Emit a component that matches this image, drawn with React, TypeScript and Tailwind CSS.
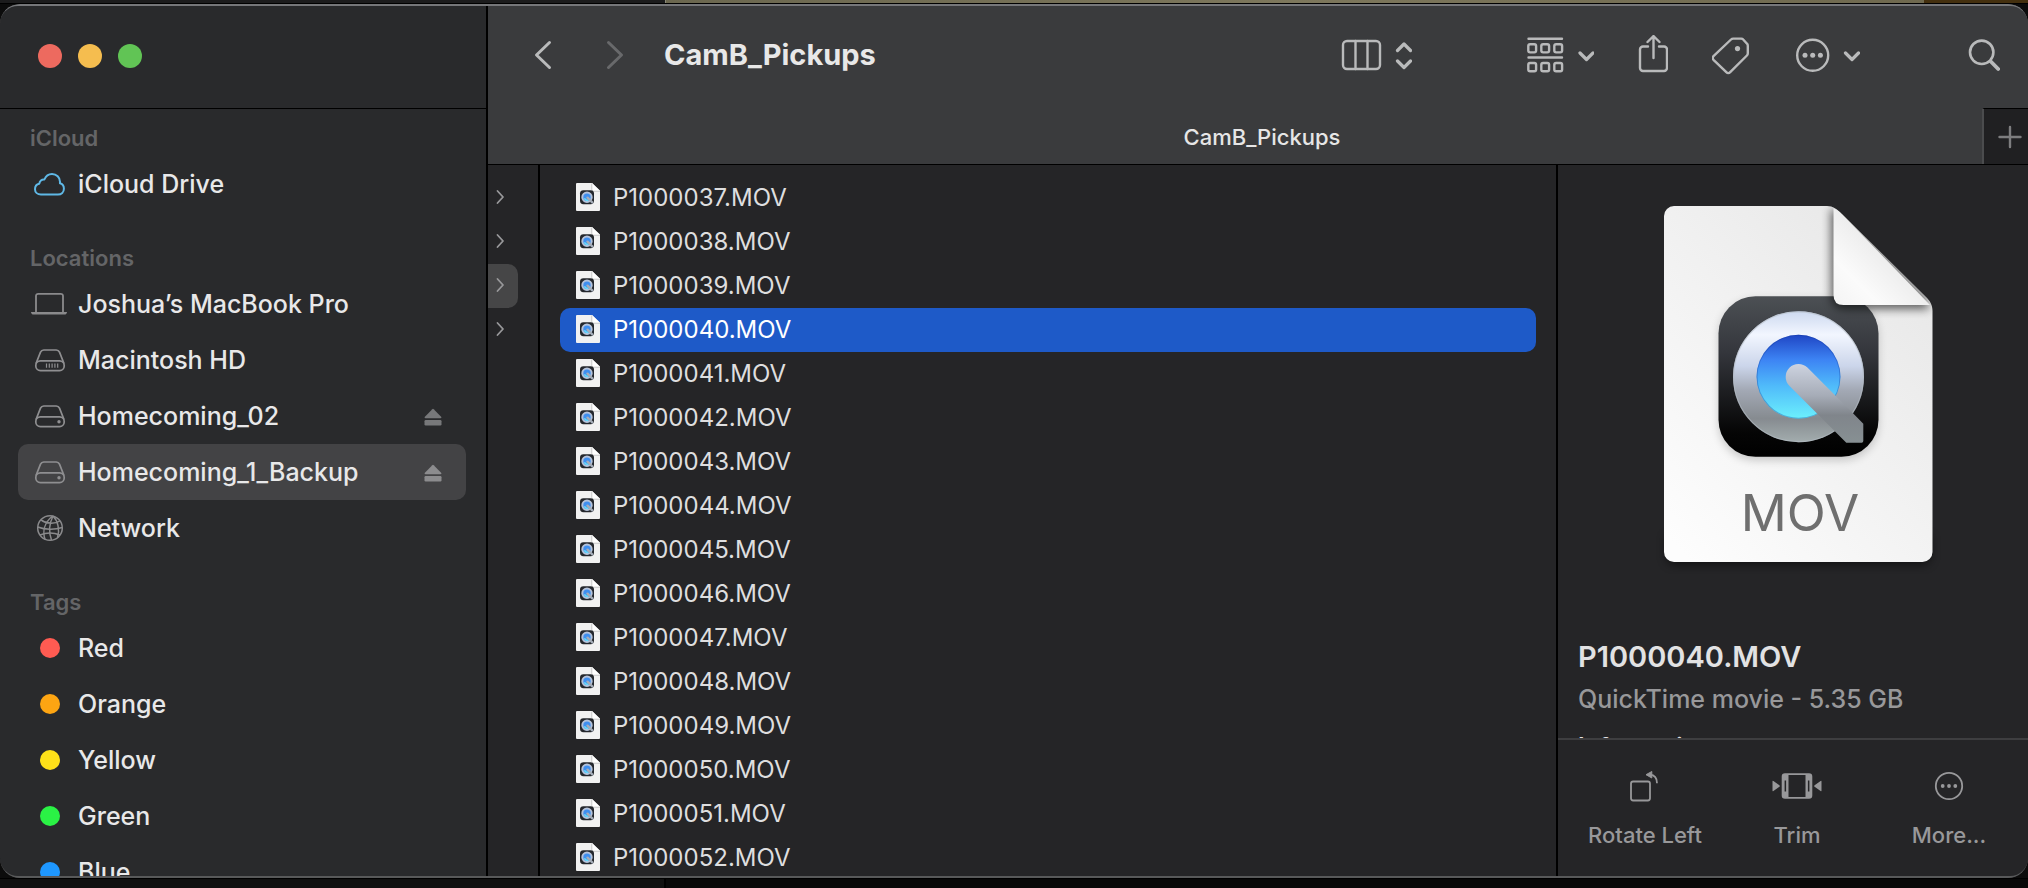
import { useState } from "react";
import type { ReactNode } from "react";
import clsx from "clsx";

interface SidebarItem {
  label: string;
  icon: ReactNode;
  ejectable?: boolean;
}

interface SidebarSection {
  title: string;
  items: SidebarItem[];
}

const files = Array.from({ length: 16 }, (_, i) => `P10000${37 + i}.MOV`);

function CloudIcon() {
  return (
    <svg viewBox="0 0 36 28" className="h-7 w-9 text-[#5fb8e6]" fill="none" stroke="currentColor" strokeWidth="2">
      <path d="M10 24.6c-3.400 0-6-2.300-6-5.400 0-2.900 1.800-5 4.300-5.400.2-2.800 2.400-4.600 5.100-4.300C14.800 6 17.500 4 21 4c4.500 0 8 3.400 8 7.800 0 .6 0 1-.1 1.500 2.400.6 4 2.800 4 5.500 0 3.300-2.500 5.800-6 5.800z" strokeLinejoin="round" />
    </svg>
  );
}

function LaptopIcon() {
  return (
    <svg viewBox="0 0 36 28" className="h-7 w-9 text-[#8a8a8c]" fill="none" stroke="currentColor">
      <path d="M5 22V6a2.200 2.200 0 0 1 2.200-2.200h22.600A2.200 2.200 0 0 1 32 6v16" strokeWidth="1.8" />
      <path d="M0 22h36c0 1.500-1 2.600-2.600 2.600H2.600C1 24.600 0 23.500 0 22z" fill="currentColor" stroke="none" />
    </svg>
  );
}

function DriveIcon({ internal = false }: { internal?: boolean }) {
  return (
    <svg viewBox="0 0 36 28" className="h-7 w-9 text-[#8f8f91]" fill="none" stroke="currentColor" strokeWidth="1.7">
      <path d="M5 17.500 9.500 6.200C10.200 4.600 11.200 4 12.800 4h12.400c1.600 0 2.600.6 3.300 2.200L33 17.500" />
      <rect x="4.8" y="14.8" width="28.4" height="9.800" rx="4.6" />
      {internal ? (
        <path d="M15.500 17.500v4.200M18.300 17.500v4.200M21.100 17.500v4.200M23.900 17.500v4.200M26.700 17.500v4.200" strokeWidth="1.2" />
      ) : (
        <circle cx="28" cy="19.7" r="1.7" fill="currentColor" stroke="none" />
      )}
    </svg>
  );
}

function GlobeIcon() {
  return (
    <svg viewBox="0 0 36 28" className="h-7 w-9 text-[#8a8a8c]" fill="none" stroke="currentColor" strokeWidth="1.5">
      <circle cx="19" cy="14" r="12.3" />
      <path d="M21.500 2C13 9 11.500 18 14 25.500M22 2c-4 8-4.500 16-1.500 24M22 2c5 5 7 14 4.500 21.500" />
      <path d="M10 5.800c5 4 13.500 4.500 19 1M6.800 13c7 2.800 17 3 24.500.5M9 21c6-2.500 14-2.500 20 0" />
    </svg>
  );
}

function EjectIcon() {
  return (
    <svg viewBox="0 0 18 18" className="h-[18px] w-[18px]" fill="currentColor">
      <path d="M8.300 1.200a1 1 0 0 1 1.400 0l7.400 7.600c.6.7.3 1.500-.6 1.500h-15c-.9 0-1.200-.8-.6-1.500z" />
      <rect x="0.5" y="12" width="17" height="5.5" rx="1.2" />
    </svg>
  );
}

function TagDot({ className }: { className: string }) {
  return (
    <span className="flex w-9 justify-center pl-0.5">
      <span className={clsx("h-5 w-5 rounded-full", className)} />
    </span>
  );
}

const sections: SidebarSection[] = [
  { title: "iCloud", items: [{ label: "iCloud Drive", icon: <CloudIcon /> }] },
  {
    title: "Locations",
    items: [
      { label: "Joshua’s MacBook Pro", icon: <LaptopIcon /> },
      { label: "Macintosh HD", icon: <DriveIcon internal /> },
      { label: "Homecoming_02", icon: <DriveIcon />, ejectable: true },
      { label: "Homecoming_1_Backup", icon: <DriveIcon />, ejectable: true },
      { label: "Network", icon: <GlobeIcon /> },
    ],
  },
  {
    title: "Tags",
    items: [
      { label: "Red", icon: <TagDot className="bg-[#ff5b52]" /> },
      { label: "Orange", icon: <TagDot className="bg-[#fda512]" /> },
      { label: "Yellow", icon: <TagDot className="bg-[#fee119]" /> },
      { label: "Green", icon: <TagDot className="bg-[#2af245]" /> },
      { label: "Blue", icon: <TagDot className="bg-[#1e97ff]" /> },
    ],
  },
];

function Sidebar() {
  const [current, setCurrent] = useState("Homecoming_1_Backup");

  return (
    <aside className="flex w-[488px] shrink-0 flex-col border-r-2 border-black bg-[#292a2c]">
      {/* Traffic lights */}
      <div className="flex h-[105px] shrink-0 items-center gap-4 border-b border-black pl-[38px]">
        <button aria-label="Close" className="h-6 w-6 rounded-full bg-[#ed6a5f]" />
        <button aria-label="Minimize" className="h-6 w-6 rounded-full bg-[#f5bd4f]" />
        <button aria-label="Zoom" className="h-6 w-6 rounded-full bg-[#61c455]" />
      </div>

      <nav className="flex min-h-0 flex-1 flex-col gap-7 overflow-hidden pt-[11px]">
        {sections.map((section) => (
          <section key={section.title}>
            <h2 className="pl-[30px] text-[22px] leading-9 font-semibold text-[#646567]">{section.title}</h2>
            <ul>
              {section.items.map((item) => (
                <li
                  key={item.label}
                  className={clsx(
                    "mr-5 ml-[18px] flex h-14 items-center rounded-[10px] pr-6 pl-[13px]",
                    item.label === current && "bg-[#434345]"
                  )}
                >
                  <a
                    href="#"
                    onClick={() => setCurrent(item.label)}
                    className="flex flex-1 items-center gap-[11px] text-[25px] font-medium text-[#e8e8e9]"
                  >
                    {item.icon}
                    <span className="pt-0.5">{item.label}</span>
                  </a>
                  {item.ejectable && (
                    <button
                      aria-label={`Eject ${item.label}`}
                      className={clsx("pt-0.5", item.label === current ? "text-[#8c8c8e]" : "text-[#77787a]")}
                    >
                      <EjectIcon />
                    </button>
                  )}
                </li>
              ))}
            </ul>
          </section>
        ))}
      </nav>
    </aside>
  );
}

function Toolbar() {
  return (
    <header className="flex h-[104px] shrink-0 items-center bg-[#3a3b3d] pr-7 pb-0.5 pl-[46px] text-[#b9babb]">
      <button aria-label="Back">
        <svg viewBox="0 0 18 40" className="h-10 w-[18px]" fill="none" stroke="currentColor" strokeWidth="3" strokeLinecap="round" strokeLinejoin="round">
          <path d="M15.500 7.500 2.500 20l13 12.500" />
        </svg>
      </button>
      <button aria-label="Forward" className="ml-[54px] text-[#68696b]">
        <svg viewBox="0 0 18 40" className="h-10 w-[18px]" fill="none" stroke="currentColor" strokeWidth="3" strokeLinecap="round" strokeLinejoin="round">
          <path d="m2.500 7.500 13 12.500-13 12.500" />
        </svg>
      </button>
      <h1 className="ml-10 text-[29px] font-bold text-[#e8e8e8]">CamB_Pickups</h1>

      <button aria-label="View" className="ml-auto">
        <svg viewBox="0 0 72 40" className="h-10 w-[72px]" fill="none" stroke="currentColor" strokeLinecap="round" strokeLinejoin="round">
          <rect x="3" y="6" width="37" height="28" rx="4" strokeWidth="2.4" />
          <path d="M15.500 6v28M27.500 6v28" strokeWidth="2.4" />
          <path d="m57.500 15.500 6.500-6.500 6.500 6.500M57.500 26l6.500 6.500 6.500-6.500" strokeWidth="3.2" />
        </svg>
      </button>
      <button aria-label="Group" className="ml-[114px]">
        <svg viewBox="0 0 68 40" className="h-10 w-[68px]" fill="none" stroke="currentColor" strokeWidth="2.4" strokeLinecap="round" strokeLinejoin="round">
          <path d="M2.500 3.800h33.500M2.500 22.500h33.500" />
          <rect x="2.3" y="9.2" width="7.800" height="8.200" rx="1.8" />
          <rect x="15.3" y="9.2" width="7.800" height="8.200" rx="1.8" />
          <rect x="28.3" y="9.2" width="7.800" height="8.200" rx="1.8" />
          <rect x="2.3" y="28" width="7.800" height="8.200" rx="1.8" />
          <rect x="15.3" y="28" width="7.800" height="8.200" rx="1.8" />
          <rect x="28.3" y="28" width="7.800" height="8.200" rx="1.8" />
          <path d="m54 18 6.500 6.500L67 18" strokeWidth="3.2" />
        </svg>
      </button>
      <button aria-label="Share" className="ml-11">
        <svg viewBox="0 0 30 40" className="h-10 w-[30px]" fill="none" stroke="currentColor" strokeWidth="2.4" strokeLinecap="round" strokeLinejoin="round">
          <path d="M10 11.500H5a3 3 0 0 0-3 3V33a3 3 0 0 0 3 3h21a3 3 0 0 0 3-3V14.500a3 3 0 0 0-3-3h-5" />
          <path d="M15.500 23V1.500M9.500 7l6-6 6 6" />
        </svg>
      </button>
      <button aria-label="Tags" className="ml-11">
        <svg viewBox="0 0 38 40" className="h-10 w-[38px]" fill="none" stroke="currentColor" strokeWidth="2.4" strokeLinecap="round" strokeLinejoin="round">
          <path d="M19 4.500c.6-.6 1.300-.9 2.200-.9h8c.8 0 1.500.3 2 .9l3.800 4.200c.6.6.8 1.200.8 2v7.600c0 .9-.3 1.600-.9 2.200L18.200 37.200c-1.200 1.200-2.700 1.200-3.900 0L1.500 24.800c-1.100-1.200-1.100-2.500 0-3.700z" />
          <circle cx="25.500" cy="13.6" r="2.6" fill="currentColor" stroke="none" />
        </svg>
      </button>
      <button aria-label="Actions" className="ml-[46px]">
        <svg viewBox="0 0 64 40" className="h-10 w-16" fill="none" stroke="currentColor" strokeLinecap="round" strokeLinejoin="round">
          <circle cx="16.700" cy="20.300" r="15.500" strokeWidth="2.4" />
          <g fill="currentColor" stroke="none">
            <circle cx="9" cy="20.300" r="2.500" />
            <circle cx="16.700" cy="20.300" r="2.500" />
            <circle cx="24.400" cy="20.300" r="2.500" />
          </g>
          <path d="m49.500 18 6.500 6.500 6.500-6.500" strokeWidth="3.2" />
        </svg>
      </button>
      <button aria-label="Search" className="ml-[108px]">
        <svg viewBox="0 0 32 40" className="h-10 w-8" fill="none" stroke="currentColor" strokeLinecap="round">
          <circle cx="13.700" cy="17.300" r="11.700" strokeWidth="2.600" />
          <path d="m22.800 26.500 7.400 7.500" strokeWidth="3.800" />
        </svg>
      </button>
    </header>
  );
}

function TabBar() {
  return (
    <div className="flex h-[57px] shrink-0 border-b border-black bg-[#3a3b3d]">
      <button className="flex-1 pt-0.5 pl-[54px] text-[22px] font-medium text-[#e6e6e6]">CamB_Pickups</button>
      <button
        aria-label="New tab"
        className="flex w-[46px] items-center justify-center border-t border-l-2 border-t-black border-l-[#4b4c4e] bg-[#202022] pl-2 text-[#7d7d7f]"
      >
        <svg viewBox="0 0 24 24" className="h-6 w-6" fill="none" stroke="currentColor" strokeWidth="2.4" strokeLinecap="round">
          <path d="M12 2v20M1.500 12h21" />
        </svg>
      </button>
    </div>
  );
}

function FileIcon() {
  return (
    <svg viewBox="0 0 24 28" className="h-7 w-6 shrink-0">
      <path d="M1 0h15l8 7.500V27a1 1 0 0 1-1 1H1a1 1 0 0 1-1-1V1a1 1 0 0 1 1-1z" fill="#f1f1f1" />
      <path d="M16 0v6.500q0 1.500 1.500 1.500H24z" fill="#fff" />
      <path d="M15.800.5v6q0 1.700 1.700 1.700H24" fill="none" stroke="#b5b5b5" strokeWidth="0.7" />
      <rect x="4" y="7.200" width="14" height="14" rx="3.400" fill="#24272c" />
      <circle cx="11" cy="14.200" r="4.700" fill="#3f8ff0" stroke="#b4c2da" strokeWidth="2" />
      <path d="M8.500 15.300a3 3 0 0 0 3.800 1.900" stroke="#67dcfa" strokeWidth="1.600" fill="none" />
      <path d="m11.500 14.700 4.700 4.700" stroke="#a5adb9" strokeWidth="2.400" strokeLinecap="round" />
    </svg>
  );
}

function ParentColumn() {
  return (
    <ul className="w-[52px] shrink-0 border-r-2 border-black pt-[11px]">
      {[0, 1, 2, 3].map((row) => (
        <li key={row}>
          <button
            aria-label={`Open folder ${row + 1}`}
            className={clsx(
              "flex h-11 w-[30px] items-center rounded-r-[10px] pb-0.5 pl-2 text-[#98989a]",
              row === 2 && "bg-[#464647]"
            )}
          >
            <svg viewBox="0 0 10 16" className="h-4 w-[10px]" fill="none" stroke="currentColor" strokeWidth="1.800" strokeLinecap="round" strokeLinejoin="round">
              <path d="m1.500 2 5.500 6-5.500 6" />
            </svg>
          </button>
        </li>
      ))}
    </ul>
  );
}

function FileColumn({ selected, onSelect }: { selected: string; onSelect: (name: string) => void }) {
  return (
    <ul className="min-w-0 flex-1 overflow-hidden px-5 pt-[11px]">
      {files.map((name) => (
        <li key={name}>
          <button
            onClick={() => onSelect(name)}
            className={clsx(
              "flex h-11 w-full items-center gap-[13px] rounded-[10px] pb-0.5 pl-4 text-[24px]",
              name === selected ? "bg-[#1e5ac8] text-white" : "text-[#dededf]"
            )}
          >
            <FileIcon />
            <span className="pt-0.5">{name}</span>
          </button>
        </li>
      ))}
    </ul>
  );
}

function MovieDocument() {
  return (
    <svg viewBox="0 0 269 356" className="h-[356px] w-[269px] shrink-0 overflow-visible">
      <defs>
        <linearGradient id="paper" x1="0.9" y1="0" x2="0.1" y2="1">
          <stop offset="0" stopColor="#e6e6e6" />
          <stop offset="1" stopColor="#fdfdfd" />
        </linearGradient>
        <linearGradient id="fold" x1="0.6" y1="0.4" x2="0" y2="1">
          <stop offset="0" stopColor="#e9e9e9" />
          <stop offset="0.6" stopColor="#fbfbfb" />
          <stop offset="1" stopColor="#f4f4f4" />
        </linearGradient>
        <linearGradient id="tile" x1="0" y1="0" x2="0" y2="1">
          <stop offset="0" stopColor="#4c5054" />
          <stop offset="0.35" stopColor="#34363c" />
          <stop offset="0.85" stopColor="#050505" />
          <stop offset="1" stopColor="#000" />
        </linearGradient>
        <linearGradient id="ring" x1="0" y1="0" x2="0" y2="1">
          <stop offset="0" stopColor="#cdd9ef" />
          <stop offset="0.18" stopColor="#f2f6ff" />
          <stop offset="0.42" stopColor="#cbd5ea" />
          <stop offset="0.6" stopColor="#a3a9b5" />
          <stop offset="0.82" stopColor="#868b90" />
          <stop offset="1" stopColor="#a3adae" />
        </linearGradient>
        <linearGradient id="lens" x1="0" y1="0" x2="0" y2="1">
          <stop offset="0" stopColor="#1f45c4" />
          <stop offset="0.3" stopColor="#3d84f4" />
          <stop offset="0.6" stopColor="#4fb9fa" />
          <stop offset="1" stopColor="#6cf0fc" />
        </linearGradient>
        <linearGradient id="tail" gradientUnits="userSpaceOnUse" x1="0" y1="158" x2="0" y2="237">
          <stop offset="0" stopColor="#cdd3e0" />
          <stop offset="0.4" stopColor="#a6acb7" />
          <stop offset="0.65" stopColor="#80858b" />
          <stop offset="1" stopColor="#879093" />
        </linearGradient>
        <filter id="soft" x="-30%" y="-30%" width="160%" height="160%">
          <feGaussianBlur stdDeviation="5" />
        </filter>
        <clipPath id="page">
          <path d="M10 0h153c6 0 10 3 15 8l84 83c4 4 6.500 8 6.500 14v241a10 10 0 0 1-10 10H10a10 10 0 0 1-10-10V10A10 10 0 0 1 10 0z" />
        </clipPath>
        <clipPath id="lensClip">
          <circle cx="134.5" cy="170.7" r="42" />
        </clipPath>
      </defs>
      <path d="M2 330h265v18a10 10 0 0 1-10 11H12a10 10 0 0 1-10-11z" fill="#000" opacity="0.5" filter="url(#soft)" />
      <g clipPath="url(#page)">
        <rect width="269" height="356" fill="url(#paper)" />
        <rect x="55" y="94" width="159" height="160" rx="36" fill="#000" opacity="0.2" filter="url(#soft)" />
        <rect x="54.5" y="90.3" width="160" height="160.5" rx="37" fill="url(#tile)" />
        <path d="M167 2v86q0 15 15 15h84l-5-12-83-84z" fill="#000" opacity="0.6" filter="url(#soft)" />
        <path d="M169.500 2v87q0 10 10 10H266L175 5z" fill="url(#fold)" />
      </g>
      <circle cx="134.5" cy="170.7" r="65.5" fill="url(#ring)" />
      <circle cx="134.5" cy="170.7" r="64.9" fill="none" stroke="#b4bcc4" strokeWidth="1.2" opacity="0.6" />
      <circle cx="134.5" cy="170.7" r="42" fill="url(#lens)" />
      <circle cx="134.5" cy="170.7" r="42.500" fill="none" stroke="#123a9a" strokeWidth="3" opacity="0.35" clipPath="url(#lensClip)" />
      <path d="M143.400 161.600 189 207.300l10.300 10.500v17.200q0 1.700-1.700 1.700h-15.300L125.300 179.700a12.800 12.800 0 0 1 18.100-18.100z" fill="url(#tail)" />
      <text x="136" y="325" textAnchor="middle" fontSize="51" fontWeight="400" fill="#6f6f6f" fontFamily="Inter, sans-serif">
        MOV
      </text>
    </svg>
  );
}

function QuickAction({ label, children }: { label: string; children: ReactNode }) {
  return (
    <button className="flex flex-1 flex-col items-center gap-[17px] text-[22px] leading-7 font-medium text-[#98989a]">
      {children}
      <span>{label}</span>
    </button>
  );
}

function Preview({ name }: { name: string }) {
  return (
    <section className="flex w-[472px] shrink-0 flex-col border-l-2 border-black">
      <div className="flex min-h-0 flex-1 flex-col overflow-hidden pt-[41px]">
        <div className="flex shrink-0 justify-center pl-[10px]">
          <MovieDocument />
        </div>
        <div className="px-5 pt-[75px]">
          <h2 className="text-[29px] leading-10 font-semibold text-[#e2e2e3]">{name}</h2>
          <p className="text-[25px] leading-[44px] font-medium text-[#98989a]">QuickTime movie - 5.35 GB</p>
          <h3 className="pt-1.5 text-[24px] leading-10 font-semibold text-[#e2e2e3]">Information</h3>
        </div>
      </div>

      {/* Quick actions */}
      <div className="flex h-[140px] shrink-0 items-start border-t-2 border-[#3e3e40] pt-[30px] pr-[3px] pl-[11px]">
        <QuickAction label="Rotate Left">
          <svg viewBox="0 0 32 34" className="h-[34px] w-8" fill="none" stroke="currentColor" strokeWidth="1.800">
            <rect x="2" y="11.500" width="19" height="19" rx="2.200" />
            <path d="M21 4.700c4.500.3 7 3.200 7 8.600" />
            <path d="M17 4.700 22.800 1.500V8z" fill="currentColor" strokeWidth="1" strokeLinejoin="round" />
          </svg>
        </QuickAction>
        <QuickAction label="Trim">
          <svg viewBox="0 0 50 34" className="h-[34px] w-[50px]" fill="currentColor">
            <path d="M.5 11.500v9q0 1 .9.4l6-4.100q.9-.8 0-1.600l-6-4.100q-.9-.6-.9.4zM49.500 11.500v9q0 1-.9.4l-6-4.100q-.9-.8 0-1.600l6-4.100q.9-.6.9.4z" />
            <path fillRule="evenodd" d="M13 3.200h24a3.300 3.300 0 0 1 3.300 3.300v19A3.300 3.300 0 0 1 37 28.800H13a3.300 3.300 0 0 1-3.300-3.300v-19A3.300 3.300 0 0 1 13 3.200zM16.500 5v22h17V5zM12.600 10.500v11h1.500v-11zM35.900 10.500v11h1.500v-11z" />
          </svg>
        </QuickAction>
        <QuickAction label="More...">
          <svg viewBox="0 0 34 34" className="h-[34px] w-[34px]" fill="currentColor">
            <circle cx="17" cy="16" r="13.200" fill="none" stroke="currentColor" strokeWidth="1.800" />
            <circle cx="10.700" cy="16" r="1.900" />
            <circle cx="17" cy="16" r="1.900" />
            <circle cx="23.300" cy="16" r="1.900" />
          </svg>
        </QuickAction>
      </div>
    </section>
  );
}

export default function App() {
  const [selected, setSelected] = useState("P1000040.MOV");

  return (
    <div className="flex h-screen flex-col overflow-hidden bg-[#0c0c0c] font-['Inter',sans-serif]">
      {/* Desktop behind the window */}
      <div className="flex h-1 shrink-0 border-b border-black">
        <div className="w-[666px] border-r border-[#8a8a7a] bg-[#1c1c1d]" />
        <div className="flex-1 bg-linear-to-r from-[#6b674f] via-[#7d775c] to-[#6f694f]" />
        <div className="w-[104px] bg-[#44300f]" />
      </div>

      <main className="relative flex min-h-0 flex-1 overflow-hidden rounded-[20px]">
        <Sidebar />
        <div className="flex min-w-0 flex-1 flex-col bg-[#252527]">
          <Toolbar />
          <TabBar />
          <div className="flex min-h-0 flex-1">
            <ParentColumn />
            <FileColumn selected={selected} onSelect={setSelected} />
            <Preview name={selected} />
          </div>
        </div>
        <div className="pointer-events-none absolute -inset-x-0.5 inset-y-0 rounded-[20px] border-2 border-t-[#76777a] border-b-[#58595a] border-x-[#58595a]" />
      </main>

      <div className="flex h-[10px] shrink-0 border-t border-black">
        <div className="w-[666px] border-r-2 border-black bg-[#101010]" />
        <div className="flex-1 bg-[#080808]" />
      </div>
    </div>
  );
}
